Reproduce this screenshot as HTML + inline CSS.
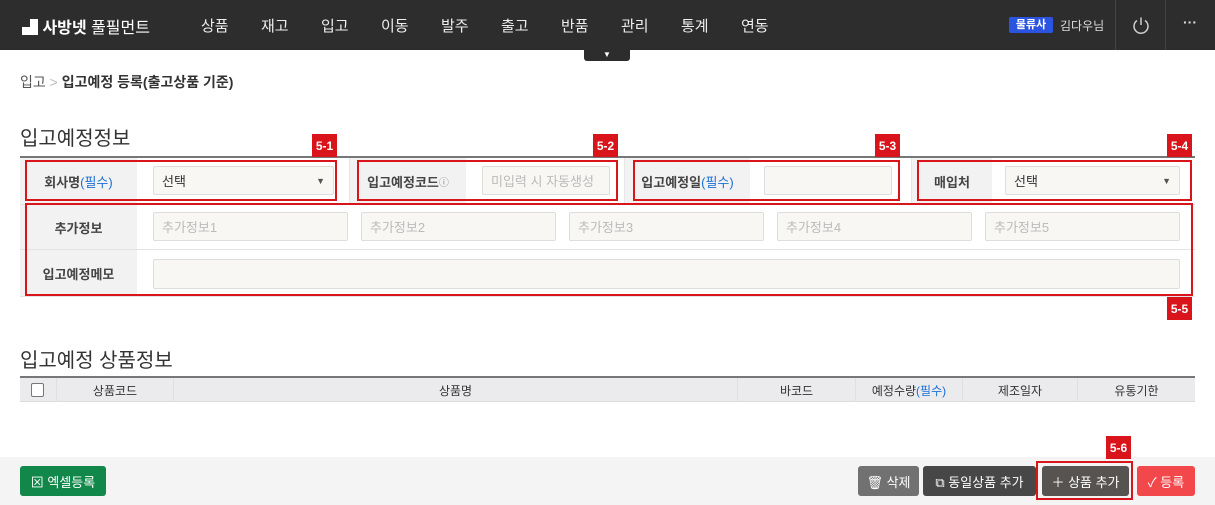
<!DOCTYPE html>
<html><head><meta charset="utf-8"><style>
*{margin:0;padding:0;box-sizing:border-box}
body{width:1215px;height:505px;position:relative;background:#fff;font-family:"Liberation Sans","Noto Sans CJK KR",sans-serif;overflow:hidden;color:#333}
.a{position:absolute}
.hdr{left:0;top:0;width:1215px;height:50px;background:#2d2d2d}
.nav{top:15px;color:#eee;font-size:15px}
.lbl{background:#f2f2f2;font-size:13px;color:#444;font-weight:bold;display:flex;align-items:center;justify-content:center}
.inp{background:#f8f7f4;border:1px solid #ddd;border-radius:2px;font-size:13px;color:#bbb;padding-left:8px;display:flex;align-items:center}
.red{border:2px solid #d9141b}
.bd{background:#d9141b;color:#fff;font-size:12px;font-weight:bold;width:25px;height:23px;display:flex;align-items:center;justify-content:center}
.hl{height:1px;background:#e3e3e3}
.vl{width:1px;background:#e6e6e6}
.th{top:378px;height:24px;font-size:12px;color:#333;display:flex;align-items:center;justify-content:center;border-left:1px solid #e0e0e0}
.btn{top:466px;height:30px;border-radius:3px;color:#fff;font-size:13px;display:flex;align-items:center;justify-content:center}
.req{color:#1a6fd6;font-weight:normal}
</style></head><body>
<div class="a hdr"></div>
<div class="a" style="left:22px;top:14px;color:#fff;font-size:16px;font-weight:bold">▟ 사방넷 <span style="font-weight:normal">풀필먼트</span></div>
<div class="a nav" style="left:201px">상품</div>
<div class="a nav" style="left:261px">재고</div>
<div class="a nav" style="left:321px">입고</div>
<div class="a nav" style="left:381px">이동</div>
<div class="a nav" style="left:441px">발주</div>
<div class="a nav" style="left:501px">출고</div>
<div class="a nav" style="left:561px">반품</div>
<div class="a nav" style="left:621px">관리</div>
<div class="a nav" style="left:681px">통계</div>
<div class="a nav" style="left:741px">연동</div>
<div class="a" style="left:584px;top:50px;width:46px;height:11px;background:#2d2d2d;border-radius:0 0 3px 3px;color:#fff;font-size:8px;text-align:center;line-height:9px">▼</div>
<div class="a" style="left:1009px;top:17px;width:44px;height:16px;background:#2b55e0;border-radius:2px;color:#fff;font-size:11px;font-weight:bold;text-align:center;line-height:16px">물류사</div>
<div class="a" style="left:1060px;top:17px;color:#ddd;font-size:12px">김다우님</div>
<div class="a" style="left:1115px;top:0;width:1px;height:50px;background:#444"></div>
<div class="a" style="left:1165px;top:0;width:1px;height:50px;background:#444"></div>
<svg class="a" style="left:1132px;top:16px" width="18" height="18" viewBox="0 0 18 18"><path d="M5 4.5A7 7 0 1 0 13 4.5M9 1.5V9" fill="none" stroke="#ccc" stroke-width="1.5"/></svg>
<div class="a" style="left:1183px;top:14px;color:#ddd;font-size:14px;font-weight:bold">···</div>

<div class="a" style="left:20px;top:72px;font-size:14px;color:#555">입고 <span style="color:#bbb">&gt;</span> <b style="color:#333">입고예정 등록(출고상품 기준)</b></div>
<div class="a" style="left:20px;top:122px;font-size:20px;color:#333">입고예정정보</div>

<div class="a" style="left:20px;top:156px;width:1175px;height:2px;background:#777"></div>
<div class="a lbl" style="left:20px;top:158px;width:117px;height:46px">회사명<span class="req">(필수)</span></div>
<div class="a inp" style="left:153px;top:166px;width:181px;height:29px;color:#333">선택<span style="position:absolute;right:8px;font-size:9px;color:#555">▼</span></div>
<div class="a vl" style="left:349px;top:158px;height:46px"></div>
<div class="a lbl" style="left:350px;top:158px;width:116px;height:46px">입고예정코드<span style="font-size:10px;color:#888;font-weight:normal">ⓘ</span></div>
<div class="a inp" style="left:482px;top:166px;width:128px;height:29px">미입력 시 자동생성</div>
<div class="a vl" style="left:624px;top:158px;height:46px"></div>
<div class="a lbl" style="left:625px;top:158px;width:125px;height:46px">입고예정일<span class="req">(필수)</span></div>
<div class="a inp" style="left:764px;top:166px;width:128px;height:29px"></div>
<div class="a vl" style="left:911px;top:158px;height:46px"></div>
<div class="a lbl" style="left:912px;top:158px;width:80px;height:46px">매입처</div>
<div class="a inp" style="left:1005px;top:166px;width:175px;height:29px;color:#333">선택<span style="position:absolute;right:8px;font-size:9px;color:#555">▼</span></div>
<div class="a hl" style="left:20px;top:204px;width:1175px"></div>
<div class="a lbl" style="left:20px;top:205px;width:117px;height:44px">추가정보</div>
<div class="a inp" style="left:153px;top:212px;width:195px;height:29px">추가정보1</div>
<div class="a inp" style="left:361px;top:212px;width:195px;height:29px">추가정보2</div>
<div class="a inp" style="left:569px;top:212px;width:195px;height:29px">추가정보3</div>
<div class="a inp" style="left:777px;top:212px;width:195px;height:29px">추가정보4</div>
<div class="a inp" style="left:985px;top:212px;width:195px;height:29px">추가정보5</div>
<div class="a hl" style="left:20px;top:249px;width:1175px"></div>
<div class="a lbl" style="left:20px;top:250px;width:117px;height:46px">입고예정메모</div>
<div class="a inp" style="left:153px;top:259px;width:1027px;height:30px"></div>
<div class="a hl" style="left:20px;top:296px;width:1175px"></div>

<div class="a red" style="left:25px;top:160px;width:312px;height:41px"></div>
<div class="a red" style="left:357px;top:160px;width:261px;height:41px"></div>
<div class="a red" style="left:633px;top:160px;width:267px;height:41px"></div>
<div class="a red" style="left:917px;top:160px;width:275px;height:41px"></div>
<div class="a red" style="left:25px;top:203px;width:1168px;height:93px"></div>
<div class="a bd" style="left:312px;top:134px">5-1</div>
<div class="a bd" style="left:593px;top:134px">5-2</div>
<div class="a bd" style="left:875px;top:134px">5-3</div>
<div class="a bd" style="left:1167px;top:134px">5-4</div>
<div class="a bd" style="left:1167px;top:297px">5-5</div>

<div class="a" style="left:20px;top:344px;font-size:20px;color:#333">입고예정 상품정보</div>
<div class="a" style="left:20px;top:376px;width:1175px;height:2px;background:#777"></div>
<div class="a" style="left:20px;top:378px;width:1175px;height:24px;background:#ebebee;border-bottom:1px solid #ddd"></div>
<div class="a" style="left:31px;top:383px;width:13px;height:14px;border:1px solid #777;border-radius:2px;background:#fff"></div>
<div class="a th" style="left:56px;width:117px">상품코드</div>
<div class="a th" style="left:173px;width:564px">상품명</div>
<div class="a th" style="left:737px;width:118px">바코드</div>
<div class="a th" style="left:855px;width:107px">예정수량 <span class="req">(필수)</span></div>
<div class="a th" style="left:962px;width:115px">제조일자</div>
<div class="a th" style="left:1077px;width:118px">유통기한</div>

<div class="a" style="left:0;top:457px;width:1215px;height:48px;background:#f4f4f4"></div>
<div class="a btn" style="left:20px;width:86px;background:#11884a">⊠ 엑셀등록</div>
<div class="a btn" style="left:858px;width:61px;background:#717171">🗑 삭제</div>
<div class="a btn" style="left:923px;width:113px;background:#474747">⧉ 동일상품 추가</div>
<div class="a btn" style="left:1042px;width:87px;background:#565350">＋ 상품 추가</div>
<div class="a btn" style="left:1137px;width:58px;background:#f2484c">✓ 등록</div>
<div class="a red" style="left:1036px;top:461px;width:97px;height:39px"></div>
<div class="a bd" style="left:1106px;top:436px">5-6</div>
</body></html>
